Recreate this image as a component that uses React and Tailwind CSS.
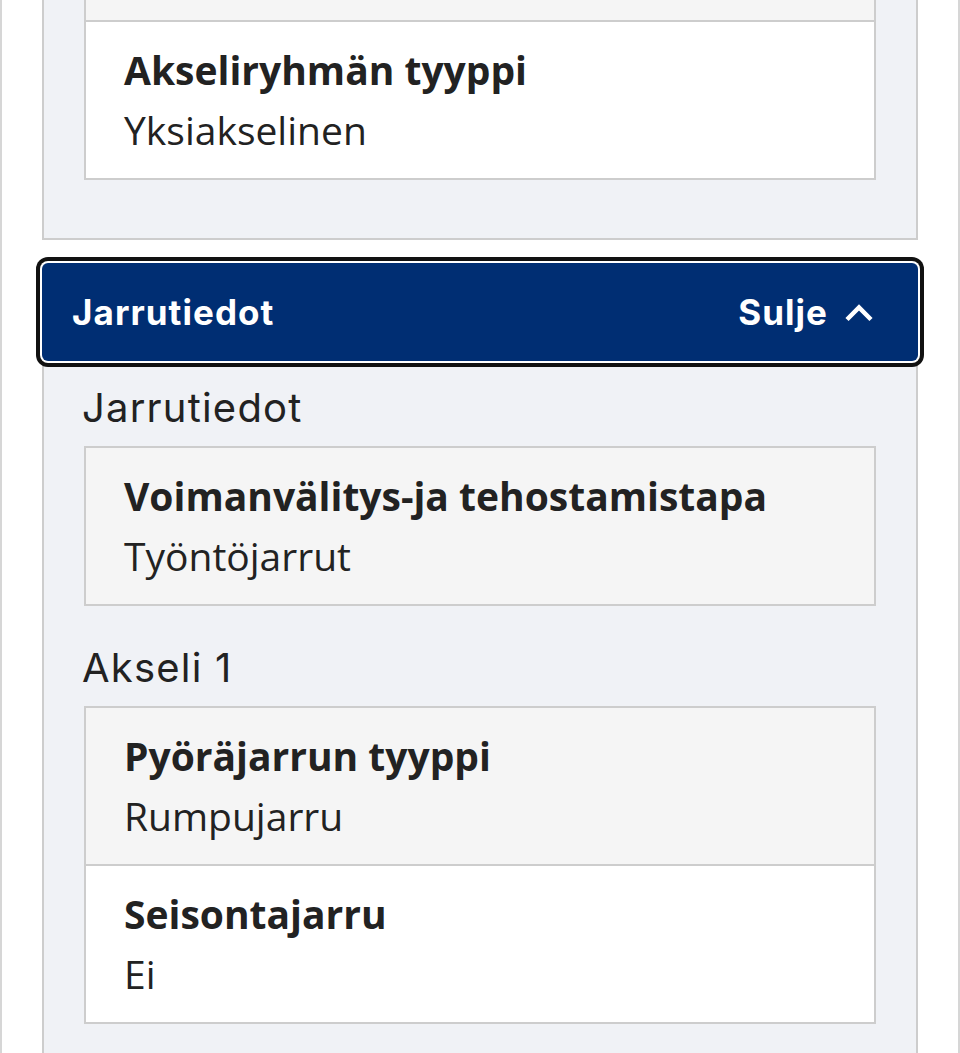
import { Fragment } from 'react';

const body = { fontFamily: '"Open Sans", "Noto Sans", sans-serif' };
const display = { fontFamily: 'Inter, "Noto Sans", sans-serif' };

// one label/value row inside a data card
const Row = ({ label, value, shade }) => (
  <div className={`border-x-2 border-b-2 border-[#cdcdcd] pl-[38px] pr-[40px] py-[18px] text-[39px] leading-[60px] text-[#222] ${shade ? 'bg-[#f5f5f5]' : 'bg-white'}`}>
    <div className="font-bold">{label}</div>
    <div>{value}</div>
  </div>
);

const Card = ({ rows }) => (
  <div className="border-t-2 border-[#cdcdcd]">
    {rows.map((r, i) => (
      <Row key={r.label} label={r.label} value={r.value} shade={i % 2 === 0} />
    ))}
  </div>
);

const groups = [
  {
    title: 'Jarrutiedot',
    rows: [{ label: 'Voimanvälitys-ja tehostamistapa', value: 'Työntöjarrut' }],
  },
  {
    title: 'Akseli 1',
    rows: [
      { label: 'Pyöräjarrun tyyppi', value: 'Rumpujarru' },
      { label: 'Seisontajarru', value: 'Ei' },
    ],
  },
];

const ChevronUp = () => (
  <svg width="30" height="20" viewBox="0 0 30 20" fill="none" stroke="currentColor" strokeWidth="4.5" strokeLinejoin="miter">
    <polyline points="3,17.5 15,5.5 27,17.5" />
  </svg>
);

export default function App() {
  return (
    <div className="w-[960px] h-[1053px] overflow-hidden bg-white border-x-2 border-[#d6d6d6] px-[40px]" style={body}>
      {/* previous section, scrolled past */}
      <div className="border-x-2 border-b-2 border-[#cdcdcd] bg-[#f0f2f6] px-[40px] pb-[58px]">
        <div className="h-[22px] border-x-2 border-b-2 border-[#cdcdcd] bg-[#f5f5f5]" />
        <Row label="Akseliryhmän tyyppi" value="Yksiakselinen" />
      </div>

      <button
        type="button"
        className="relative z-10 mt-[23px] flex h-[98px] w-full items-center justify-between rounded-[6px] bg-[#002e73] pl-[30px] pr-[44px] text-white shadow-[0_0_0_2px_#fff,0_0_0_6px_#111]"
        style={display}
      >
        <span className="text-[35px] font-bold tracking-[0.03em]">Jarrutiedot</span>
        <span className="flex items-center gap-[16px] text-[35px] font-bold tracking-[0.03em]">
          Sulje <ChevronUp />
        </span>
      </button>

      <div className="border-x-2 border-[#cdcdcd] bg-[#f0f2f6] px-[40px] pt-[23px] pb-[40px]">
        {groups.map((g, i) => (
          <Fragment key={g.title}>
            <h3
              className={`${i === 0 ? '' : 'mt-[38px]'} -ml-[2px] mb-[14px] text-[40px] leading-[48px] font-normal tracking-[0.03em] text-[#222]`}
              style={display}
            >
              {g.title}
            </h3>
            <Card rows={g.rows} />
          </Fragment>
        ))}
      </div>
    </div>
  );
}
